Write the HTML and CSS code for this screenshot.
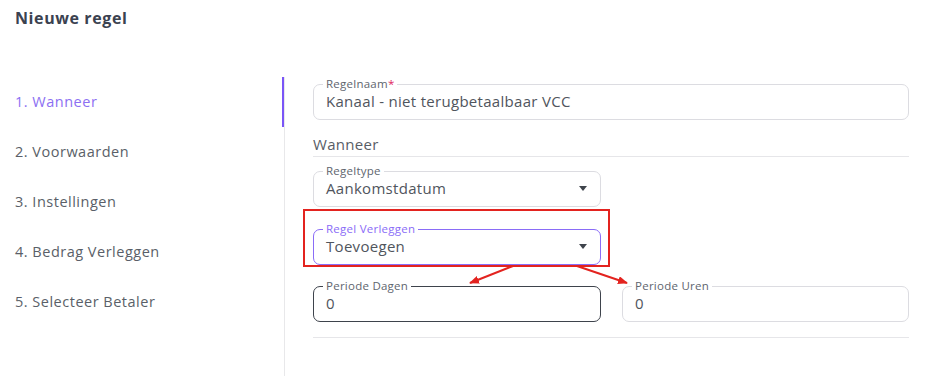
FILE: index.html
```html
<!DOCTYPE html>
<html lang="nl">
<head>
  <meta charset="UTF-8">
  <meta name="viewport" content="width=device-width, initial-scale=1.0">
  <title>Nieuwe regel</title>
  <link rel="stylesheet" href="styles.css">
</head>
<body>
  <div class="page">
    <h2 class="page-title">Nieuwe regel</h2>

    <div class="layout">
      <ul class="steps">
        <li class="step active">1. Wanneer</li>
        <li class="step">2. Voorwaarden</li>
        <li class="step">3. Instellingen</li>
        <li class="step">4. Bedrag Verleggen</li>
        <li class="step">5. Selecteer Betaler</li>
      </ul>

      <div class="content">
        <fieldset class="field">
          <legend>Regelnaam<span class="req">*</span></legend>
          <div class="value">Kanaal - niet terugbetaalbaar VCC</div>
        </fieldset>

        <div class="section-title">Wanneer</div>

        <div class="grid">
          <fieldset class="field select">
            <legend>Regeltype</legend>
            <div class="value">Aankomstdatum</div>
            <span class="caret"></span>
          </fieldset>
          <div class="spacer"></div>

          <div class="marked">
            <fieldset class="field select focused">
              <legend>Regel Verleggen</legend>
              <div class="value">Toevoegen</div>
              <span class="caret"></span>
            </fieldset>
            <div class="mark-box"></div>
          </div>
          <div class="spacer"></div>

          <fieldset class="field dark">
            <legend>Periode Dagen</legend>
            <div class="value">0</div>
          </fieldset>
          <fieldset class="field">
            <legend>Periode Uren</legend>
            <div class="value">0</div>
          </fieldset>
        </div>

        <div class="bottom-line"></div>
      </div>
    </div>

    <!-- annotation arrows -->
    <svg class="arrows" width="930" height="376" viewBox="0 0 930 376">
      <defs>
        <marker id="head" markerWidth="10" markerHeight="8" refX="9" refY="4" orient="auto" markerUnits="userSpaceOnUse">
          <path d="M0,0 L10,4 L0,8 Z" fill="#e3231f"/>
        </marker>
      </defs>
      <line x1="513" y1="266" x2="470" y2="283" stroke="#e3231f" stroke-width="2" marker-end="url(#head)"/>
      <line x1="577" y1="266" x2="627" y2="283" stroke="#e3231f" stroke-width="2" marker-end="url(#head)"/>
    </svg>
  </div>
</body>
</html>
```

FILE: styles.css
```css
body {
  margin: 0;
  font-family: "Open Sans", "DejaVu Sans", sans-serif;
  background-color: #fff;
  color: #50555d;
}

.page {
  position: relative;
  width: 930px;
  height: 376px;
  overflow: hidden;
}

.page-title {
  margin: 0;
  padding: 7px 15px 0;
  font-size: 16px;
  line-height: 22px;
  font-weight: 700;
  letter-spacing: 0.6px;
  color: #3b4250;
}

.layout {
  display: flex;
  margin-top: 48px;
  height: 299px;
}

.steps {
  list-style: none;
  margin: 0;
  padding: 0;
  width: 284px;
  border-right: 1px solid #e8e8ea;
}

.step {
  height: 50px;
  line-height: 50px;
  padding-left: 15px;
  box-sizing: border-box;
  font-size: 14.5px;
  letter-spacing: 0.5px;
  color: #5a5f68;
}

.step.active {
  color: #8c6ff2;
  box-shadow: inset -2px 0 0 #7a55f7;
}

.content {
  flex: 1;
  padding: 1px 21px 0 28px;
}

.field {
  position: relative;
  margin: 0;
  padding: 0 12px 7px;
  border: 1px solid #dcdce1;
  border-radius: 7px;
  min-width: 0;
}

.field legend {
  padding: 0 3px;
  margin-left: -3px;
  font-size: 11.5px;
  line-height: 12px;
  letter-spacing: 0.25px;
  color: #60656e;
}

.field .req {
  color: #e0245e;
}

.field .value {
  font-size: 15px;
  line-height: 22px;
  letter-spacing: 0.3px;
  color: #50555d;
}

.field.select .caret {
  position: absolute;
  right: 13px;
  top: 9px;
  width: 0;
  height: 0;
  border-left: 4.5px solid transparent;
  border-right: 4.5px solid transparent;
  border-top: 5px solid #3f444c;
}

.field.focused {
  border-color: #8a6cf7;
}

.field.focused legend {
  color: #8a6cf7;
}

.field.dark {
  border-color: #3e434c;
}

.section-title {
  margin-top: 14px;
  padding-bottom: 2px;
  line-height: 20px;
  font-size: 15px;
  letter-spacing: 0.3px;
  color: #585d66;
  border-bottom: 1px solid #e6e6e9;
}

.grid {
  display: grid;
  grid-template-columns: 288px 1fr;
  column-gap: 21px;
  row-gap: 15px;
  margin-top: 8px;
}

.marked {
  position: relative;
  margin-top: 1px;
}

.mark-box {
  position: absolute;
  left: -10px;
  right: -9px;
  top: -14px;
  bottom: -2px;
  border: 2px solid #e3231f;
  pointer-events: none;
}

.bottom-line {
  margin-top: 15px;
  border-top: 1px solid #e6e6e9;
}

.arrows {
  position: absolute;
  left: 0;
  top: 0;
  pointer-events: none;
}
```
